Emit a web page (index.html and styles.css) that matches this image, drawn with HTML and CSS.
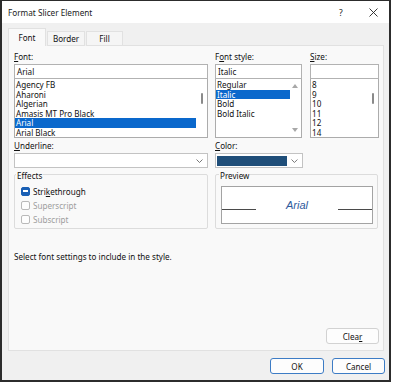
FILE: index.html
```html
<!DOCTYPE html>
<html>
<head>
<meta charset="utf-8">
<link rel="stylesheet" href="styles.css">
</head>
<body>
<div class="window">
  <div class="titlebar">
    <span class="title">Format Slicer Element</span>
    <span class="help">?</span>
    <svg class="close" width="9" height="9" viewBox="0 0 9 9"><path d="M0.5 0.5 L8.5 8.5 M8.5 0.5 L0.5 8.5" stroke="#222" stroke-width="0.9" fill="none"/></svg>
  </div>
  <div class="main">
    <div class="tabs">
      <div class="tab active">Font</div>
      <div class="tab">Border</div>
      <div class="tab fill">Fill</div>
      <div class="tab-rest"></div>
    </div>
    <div class="panel">
      <div class="top-row">
        <div class="col col-font">
          <div class="label"><u>F</u>ont:</div>
          <div class="input">Arial</div>
          <div class="list">
            <div class="items">
              <div class="item">Agency FB</div>
              <div class="item">Aharoni</div>
              <div class="item">Algerian</div>
              <div class="item">Amasis MT Pro Black</div>
              <div class="item sel">Arial</div>
              <div class="item">Arial Black</div>
            </div>
            <div class="scroll thumbbar"><div class="thumb"></div></div>
          </div>
        </div>
        <div class="col col-style">
          <div class="label">F<u>o</u>nt style:</div>
          <div class="input">Italic</div>
          <div class="list">
            <div class="items">
              <div class="item">Regular</div>
              <div class="item sel">Italic</div>
              <div class="item">Bold</div>
              <div class="item">Bold Italic</div>
            </div>
            <div class="scroll arrows">
              <svg width="6" height="4" viewBox="0 0 6 4"><path d="M0 4 L3 0 L6 4 Z" fill="#a8a8a8"/></svg>
              <svg width="6" height="4" viewBox="0 0 6 4"><path d="M0 0 L3 4 L6 0 Z" fill="#a8a8a8"/></svg>
            </div>
          </div>
        </div>
        <div class="col col-size">
          <div class="label"><u>S</u>ize:</div>
          <div class="input"></div>
          <div class="list">
            <div class="items">
              <div class="item">8</div>
              <div class="item">9</div>
              <div class="item">10</div>
              <div class="item">11</div>
              <div class="item">12</div>
              <div class="item">14</div>
            </div>
            <div class="scroll thumbbar"><div class="thumb"></div></div>
          </div>
        </div>
      </div>

      <div class="mid-row">
        <div class="col col-font">
          <div class="label"><u>U</u>nderline:</div>
          <div class="select">
            <span class="sel-val"></span>
            <svg class="chev" width="7" height="4" viewBox="0 0 7 4"><path d="M0.5 0.5 L3.5 3.5 L6.5 0.5" stroke="#555" stroke-width="0.8" fill="none"/></svg>
          </div>
        </div>
        <div class="col col-style">
          <div class="label"><u>C</u>olor:</div>
          <div class="select color">
            <span class="swatch"></span>
            <svg class="chev" width="7" height="4" viewBox="0 0 7 4"><path d="M0.5 0.5 L3.5 3.5 L6.5 0.5" stroke="#555" stroke-width="0.8" fill="none"/></svg>
          </div>
        </div>
      </div>

      <div class="groups">
        <div class="group effects">
          <div class="group-title">Effects</div>
          <div class="check-row">
            <span class="box on"><span class="dash"></span></span>
            <span>Stri<u>k</u>ethrough</span>
          </div>
          <div class="check-row disabled">
            <span class="box"></span>
            <span>Superscript</span>
          </div>
          <div class="check-row disabled">
            <span class="box"></span>
            <span>Subscript</span>
          </div>
        </div>
        <div class="group preview">
          <div class="group-title">Preview</div>
          <div class="preview-box">
            <div class="preview-row">
              <span class="pline"></span>
              <span class="pspace"></span>
              <span class="ptext">Arial</span>
              <span class="pspace"></span>
              <span class="pline"></span>
            </div>
          </div>
        </div>
      </div>

      <div class="hint">Select font settings to include in the style.</div>

      <div class="clear-row">
        <button class="btn clear">Clea<u>r</u></button>
      </div>
    </div>
    <div class="footer">
      <button class="btn primary">OK</button>
      <button class="btn primary">Cancel</button>
    </div>
  </div>
</div>
</body>
</html>
```
FILE: styles.css
```css
* { box-sizing: border-box; }
body {
  margin: 0;
  background: #ffffff;
  font-family: "Noto Sans", "Liberation Sans", sans-serif;
  font-size: 8.1px;
  color: #111111;
}
u { text-decoration: underline; text-underline-offset: 1px; }

.window {
  width: 391px;
  height: 382px;
  border: 2px solid #2c2c2c;
  border-top-width: 1px;
  background: #f0f0f0;
  display: flex;
  flex-direction: column;
}

.titlebar {
  height: 22px;
  flex: none;
  background: #ffffff;
  display: flex;
  align-items: center;
  padding-left: 6px;
}
.title { flex: 1; font-size: 8.2px; color: #1a1a1a; }
.help { font-size: 8.5px; width: 5px; margin-right: 25px; color: #222; }
.close { margin-right: 11px; }

.main {
  flex: 1;
  display: flex;
  flex-direction: column;
  padding: 5px 5px 0 6px;
}

.tabs {
  height: 18px;
  display: flex;
  align-items: flex-end;
  flex: none;
}
.tab {
  width: 38px;
  height: 15px;
  margin-right: 1px;
  background: #f5f5f5;
  border: 1px solid #e1e1e1;
  display: flex;
  align-items: center;
  justify-content: center;
}
.tab.fill { width: 37px; margin-right: 0; }
.tab.active {
  height: 18px;
  background: #f9f9f9;
  border-bottom: none;
}
.tab-rest { flex: 1; height: 1px; background: #e1e1e1; }

.panel {
  flex: 1;
  display: flex;
  flex-direction: column;
  background: #f9f9f9;
  border: 1px solid #e1e1e1;
  border-top: none;
  padding: 6px 3px 6px 5px;
}

.top-row, .mid-row, .groups { display: flex; }
.col-font { width: 194px; margin-right: 7px; }
.col-style { width: 87px; margin-right: 8px; }
.col-size { width: 69px; }

.label { height: 10px; line-height: 10px; margin-bottom: 2px; }

.input {
  height: 15px;
  background: #fff;
  border: 1px solid #b2b2b2;
  padding-left: 2px;
  line-height: 13px;
}

.list {
  height: 59px;
  background: #fff;
  border: 1px solid #acacac;
  border-top: none;
  display: flex;
}
.items { flex: 1; padding-top: 1px; }
.item { height: 9.5px; line-height: 9.5px; padding-left: 1px; white-space: nowrap; }
.item.sel { background: #0a68cc; color: #fff; }

.scroll { width: 11px; flex: none; }
.thumbbar { display: flex; justify-content: center; padding-top: 14px; }
.thumb { width: 2px; height: 11px; background: #8a8a8a; border-radius: 1px; }
.arrows {
  display: flex;
  flex-direction: column;
  align-items: center;
  justify-content: space-between;
  padding: 5px 1px 5px 0;
}

.mid-row { margin-top: 3px; }
.select {
  height: 15px;
  background: #fff;
  border: 1px solid #c3c3c3;
  display: flex;
  align-items: center;
}
.sel-val { flex: 1; }
.select .chev { margin-right: 4px; }
.select.color { padding: 2px 0 2px 1px; width: 88px; }
.swatch {
  width: 71px;
  height: 10px;
  background: #1f4e79;
  margin-right: 4px;
}

.groups { margin-top: 6px; height: 55px; }
.group {
  border: 1px solid #dcdcdc;
  border-radius: 2px;
  display: flex;
  flex-direction: column;
}
.effects { width: 194px; margin-right: 7px; padding-left: 6px; }
.preview { width: 163px; padding: 0 4px 4px 5px; }
.group-title {
  align-self: flex-start;
  margin-top: -4px;
  height: 10px;
  line-height: 10px;
  background: #f9f9f9;
  padding: 0 1px;
  margin-bottom: 5px;
}
.effects .group-title { margin-left: -5px; }
.preview .group-title { margin-left: -2px; }

.check-row {
  height: 10px;
  display: flex;
  align-items: center;
  margin-bottom: 4px;
}
.box {
  width: 9px;
  height: 9px;
  border: 1px solid #b9b9b9;
  border-radius: 2px;
  background: #fdfdfd;
  margin-right: 3px;
  display: flex;
  align-items: center;
  justify-content: center;
}
.box.on { background: #1a5fb4; border-color: #1a5fb4; }
.dash { width: 5px; height: 1.2px; background: #fff; }
.check-row.disabled { color: #9e9e9e; }

.preview-box {
  height: 38px;
  background: #fff;
  border: 1px solid #a3a3a3;
  padding-top: 12px;
}
.preview-row { display: flex; align-items: flex-start; height: 12px; }
.pline { width: 34px; height: 1px; background: #4a4a4a; margin-top: 10px; }
.pspace { flex: 1; }
.ptext {
  font-family: "Liberation Sans", Arial, sans-serif;
  font-style: italic;
  font-size: 11px;
  line-height: 12px;
  color: #2f5a9c;
}

.hint { margin-top: 23px; height: 10px; line-height: 10px; }

.clear-row {
  margin-top: auto;
  display: flex;
  justify-content: flex-end;
}
.btn {
  font-family: inherit;
  font-size: 8.1px;
  color: #111111;
  height: 16px;
  border-radius: 3px;
  padding: 0;
  background: #fdfdfd;
}
.clear {
  width: 53px;
  border: 1px solid #d2d2d2;
  margin-right: 1px;
}
.footer {
  height: 29px;
  flex: none;
  display: flex;
  justify-content: flex-end;
  align-items: flex-start;
  padding-top: 7px;
  margin-right: -1px;
}
.primary {
  width: 54px;
  border: 1px solid #3d7cc5;
  margin-left: 8px;
}
.primary + .primary { width: 53px; }
```
